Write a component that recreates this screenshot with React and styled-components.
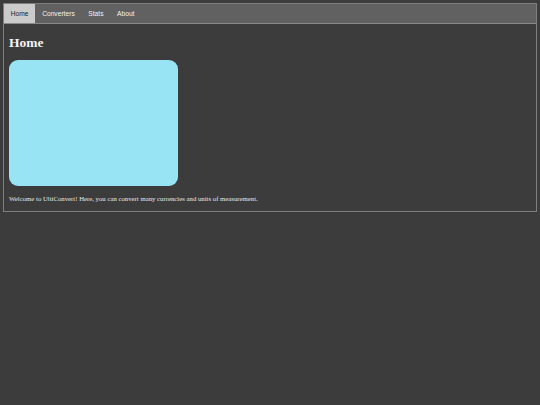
import React, { useState } from "react";
import styled, { createGlobalStyle } from "styled-components";

const Global = createGlobalStyle`
  html, body { margin: 0; padding: 0; background: #3c3c3c; }
  body { padding: 3px; font-family: "Liberation Serif", "Times New Roman", serif; color: #f0f0f0; }
`;

const Frame = styled.div`
  border: 1px solid #7e7e7e;
  box-sizing: border-box;
  width: 534px;
`;

const NavBar = styled.nav`
  display: flex;
  background: #616161;
  border-bottom: 1px solid #8a8a8a;
  height: 19px;
`;

const Tab = styled.button`
  border: none;
  margin: 0;
  padding: 0 6.8px;
  height: 19px;
  font-family: "Liberation Sans", Arial, sans-serif;
  font-size: 6.67px;
  background: ${(p) => (p.$active ? "#cbcbcb" : "transparent")};
  color: ${(p) => (p.$active ? "#1e1e1e" : "#f2f2f2")};
  cursor: pointer;
`;

const Content = styled.main`
  padding: 0 5px 5px 5px;
  display: flex;
  flex-direction: column;
  align-items: flex-start;
`;

const Heading = styled.h2`
  font-size: 13.5px;
  font-weight: bold;
  margin: 11px 0 9px 0;
  line-height: 1.15;
  color: #f4f4f4;
`;

const Picture = styled.div`
  width: 169px;
  height: 126px;
  border-radius: 9px;
  background: #98e4f4;
`;

const Text = styled.p`
  font-size: 6.75px;
  margin: 9px 0 4px 0;
  color: #e8e8e8;
`;

export default function App() {
  const [tab, setTab] = useState("Home");
  const tabs = ["Home", "Converters", "Stats", "About"];
  return (
    <>
      <Global />
      <Frame>
        <NavBar>
          {tabs.map((t) => (
            <Tab key={t} $active={t === tab} onClick={() => setTab(t)}>
              {t}
            </Tab>
          ))}
        </NavBar>
        <Content>
          <Heading>Home</Heading>
          <Picture />
          <Text>
            Welcome to UltiConvert! Here, you can convert many currencies and units of measurement.
          </Text>
        </Content>
      </Frame>
    </>
  );
}
